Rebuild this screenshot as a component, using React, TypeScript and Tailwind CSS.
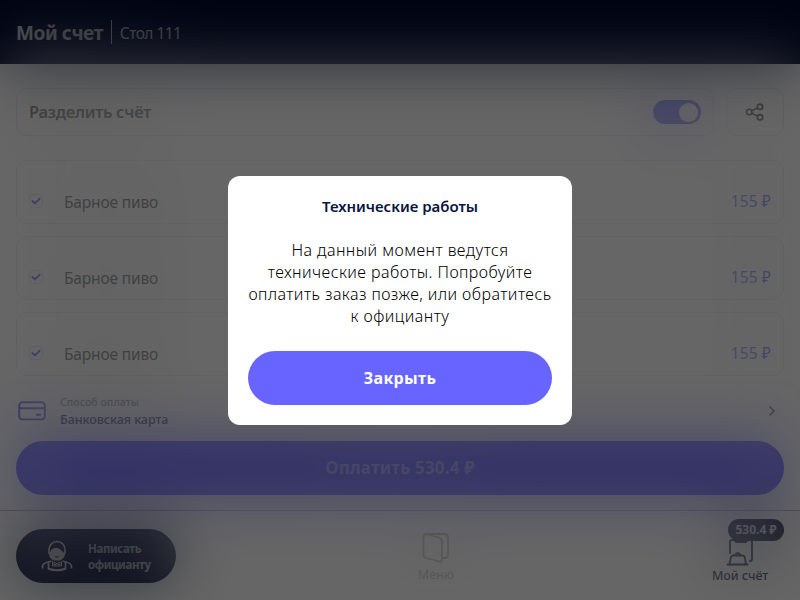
import React from 'react';

function ShareIcon() {
  return (
    <svg width="20" height="20" viewBox="0 0 20 20" fill="none" stroke="#222" strokeWidth="1.6">
      <circle cx="4.2" cy="10" r="2.700" />
      <circle cx="15" cy="4.800" r="2.700" />
      <circle cx="15" cy="15.300" r="2.700" />
      <path d="M6.700 8.800 12.500 6M6.700 11.200l5.800 2.900" />
    </svg>
  );
}

function CardIcon() {
  return (
    <svg width="28" height="20" viewBox="0 0 28 20" fill="none" stroke="#5a50ff" strokeWidth="1.9">
      <rect x="1.200" y="1.200" width="25.600" height="17.200" rx="3.200" />
      <path d="M1.200 7.200h25.600M18 13.800h5" />
    </svg>
  );
}

function WaiterIcon() {
  return (
    <svg width="32" height="32" viewBox="0 0 32 32" fill="none" stroke="#fff" strokeWidth="1.700">
      <path d="M8 14V9.500a8 8 0 0 1 16 0V14" />
      <path d="M8 13c2-1 2-4 4.500-4.500 2-1 3.500-1 5 0 2.500.5 4 3.500 6.500 5 0 4-3 6-5 7h-6c-3-1-5-3.500-5-7.500Z" fill="#fff" stroke="none" />
      <path d="M14.200 16.500q1.800 1.500 3.600 0" stroke="#000a30" strokeWidth="1" />
      <path d="M1.500 28.500v-1.500c0-3 2-4.500 6-5l3-1M30.500 28.500v-1.500c0-3-2-4.500-6-5l-3-1M7.500 21v8q8.500 3 17 0v-8M7.500 28.500q8.500 3 17 0" />
      <path d="M11.500 21v5h9v-5M13 22l3 1.600 3-1.600v3l-3-1-3 1Z" strokeWidth="1" />
    </svg>
  );
}

function MenuIcon() {
  return (
    <svg width="28" height="32" viewBox="0 0 28 32" fill="none" stroke="#b0b0b0" strokeWidth="1.8" strokeLinejoin="round">
      <path d="M4 2h19q3 0 3 3v18q0 3-3 3h-3" />
      <path d="m4 2 13.500 4q2.500.8 2.500 3.500v17.500q0 3.500-3 2.500L4 26q-2.500-.8-2.500-3V4.500Q1.500 2 4 2Z" />
    </svg>
  );
}

function BillIcon() {
  return (
    <svg width="28" height="30" viewBox="0 0 28 30" fill="none" stroke="#0a1740" strokeWidth="1.8" strokeLinecap="round" strokeLinejoin="round">
      <path d="M4 16V5q0-2 2-2h18q2 0 2 2v17q0 2-2 2M9 3q0 2 2 2h8q2 0 2-2" />
      <path d="M1.500 27.500h20M3.500 27.500l1.300-7q.4-2 2-2h10q1.600 0 2 2l1.300 7M9.500 18q0-1.800 2.200-1.800t2.200 1.800" />
    </svg>
  );
}

function OrderRow() {
  return (
    <div className="flex h-16 items-end justify-between rounded-[12px] border border-[#e5e5eb] bg-white px-3">
      <div className="flex items-end">
        <div className="mb-[15px] flex h-[14px] w-[14px] items-center justify-center rounded-[4px] border border-[#dcdce6]">
          <svg className="shrink-0" width="10" height="8" viewBox="0 0 10 8" fill="none" stroke="#3a2eff" strokeWidth="1.900">
            <path d="m.8 3.300 3.200 3.200L9.200 1.200" />
          </svg>
        </div>
        <span className="mb-[9px] ml-[21px] text-[15.500px] leading-6 font-normal tracking-[-0.150px] text-[#222]">Барное пиво</span>
      </div>
      <span className="mb-[10px] text-[15.500px] leading-6 tracking-[0.1px] text-[#5a50ff]">155 ₽</span>
    </div>
  );
}

function Modal() {
  return (
    <div className="absolute inset-0 flex items-center justify-center">
      <div className="flex h-[249px] w-[344px] flex-col rounded-[12px] bg-white px-5 pt-[19px] pb-5">
        <h2 className="text-center text-[15px] leading-[22px] font-semibold tracking-[-0.03px] text-[#0a1440]">Технические работы</h2>
        <p className="mt-[22px] text-center text-[16px] leading-[22px] font-light tracking-[0.450px] whitespace-nowrap text-black">
          На данный момент ведутся<br />технические работы. Попробуйте<br />оплатить заказ позже, или обратитесь<br />к официанту
        </p>
        <button className="mt-auto h-[54px] rounded-full bg-[#6864ff] text-[16px] font-bold tracking-[0.3px] text-white">Закрыть</button>
      </div>
    </div>
  );
}

export default function App() {
  return (
    <div className="relative h-[600px] w-[800px] overflow-hidden bg-white font-['Noto_Sans',sans-serif]">
      <div className="flex h-full flex-col">
        <header className="flex h-16 shrink-0 items-center bg-[#000a2e] px-4 text-white">
          <h1 className="pt-[2px] text-[19px] font-bold tracking-[-0.4px]">Мой счет</h1>
          <div className="ml-2 h-6 w-px bg-white" />
          <span className="ml-2 pt-[3px] text-[15.500px] tracking-[-0.550px]">Стол 111</span>
        </header>
        <main className="flex h-80 shrink-0 flex-col gap-3 px-4 pt-6">
          <div className="mb-3 flex h-12 gap-3">
            <div className="flex flex-1 items-center justify-between rounded-[12px] border border-[#e5e5eb] px-3">
              <span className="text-[16.500px] font-semibold tracking-[-0.3px] text-[#444]">Разделить счёт</span>
              <div className="flex h-6 w-12 items-center justify-end rounded-full bg-[#6864ff] pr-[3px]">
                <div className="h-[19px] w-[19px] rounded-full bg-white" />
              </div>
            </div>
            <div className="flex w-[58px] items-center justify-center rounded-[12px] border border-[#e5e5eb]"><ShareIcon /></div>
          </div>
          <OrderRow />
          <OrderRow />
          <OrderRow />
        </main>
        <section className="flex h-[126px] shrink-0 flex-col rounded-t-[20px] bg-white px-4 shadow-[0_0_8px_rgba(0,0,0,0.06)]">
          <div className="flex h-[57px] items-center pb-[3px] pl-[2px]">
            <CardIcon />
            <div className="ml-[14px] flex flex-col pt-[1px]">
              <span className="text-[10.500px] leading-[15px] font-medium tracking-[0.050px] text-[#83838f]">Способ оплаты</span>
              <span className="text-[12.500px] leading-[19px] font-medium tracking-[-0.05px] text-[#222c52]">Банковская карта</span>
            </div>
            <svg className="mr-[8px] ml-auto" width="8" height="12" viewBox="0 0 8 12" fill="none" stroke="#555" strokeWidth="1.5"><path d="m1.500 1.500 4.500 4.500-4.500 4.500" /></svg>
          </div>
          <button className="h-[54px] shrink-0 rounded-full bg-[#6864ff] text-[17px] font-bold tracking-[0.2px] text-white/60">Оплатить 530.4 ₽</button>
        </section>
        <nav className="relative flex flex-1 items-center border-t border-[#b8b8c8] bg-white px-4">
          <div className="flex h-[54px] w-40 items-center rounded-full bg-[#000a30] pl-[25px] text-white">
            <WaiterIcon />
            <span className="ml-[15px] pt-[2px] text-[11.500px] leading-4 font-bold tracking-[-0.4px] text-white/85">Написать<br />официанту</span>
          </div>
          <div className="ml-[231px] flex w-[58px] flex-col items-center pt-[5px] text-[#b8b8b8]">
            <MenuIcon />
            <span className="mt-[2px] text-[12.500px] leading-[18px] tracking-[0.1px]">Меню</span>
          </div>
          <div className="relative ml-auto flex w-[88px] flex-col items-center pt-[10px] text-[#0a1740]">
            <BillIcon />
            <span className="text-[12.500px] leading-[18px] font-medium tracking-[-0.1px]">Мой счёт</span>
            <span className="absolute -top-[8px] right-0 flex h-[22px] w-14 items-center justify-center rounded-full bg-[#000a30] text-[12px] font-bold tracking-[0px] text-white/85">530.4 ₽</span>
          </div>
        </nav>
      </div>
      <div className="absolute inset-0 opacity-60 backdrop-blur-[30px]" />
      <div className="absolute inset-0 bg-black/60" />
      <Modal />
    </div>
  );
}
